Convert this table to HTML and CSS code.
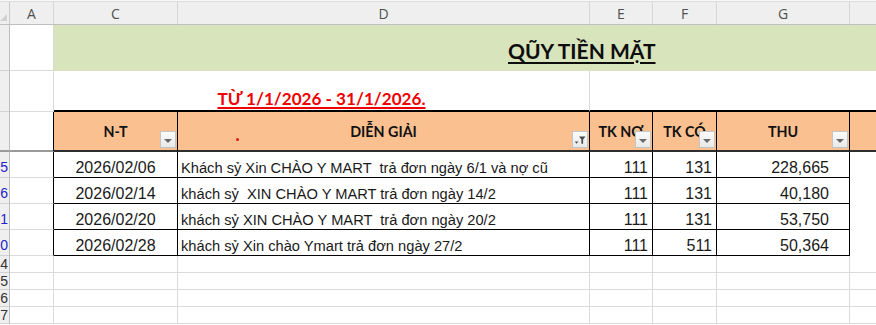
FILE: index.html
```html
<!DOCTYPE html>
<html lang="vi">
<head>
<meta charset="utf-8">
<title>Quỹ tiền mặt</title>
<link rel="stylesheet" href="styles.css">
</head>
<body>
<div class="top"></div>
<div class="sheet">
  <div class="corner"><span class="tri"></span></div>
  <div class="ch">A</div>
  <div class="ch">C</div>
  <div class="ch">D</div>
  <div class="ch">E</div>
  <div class="ch">F</div>
  <div class="ch">G</div>
  <div class="ch ch-last"></div>

  <div class="rh"></div>
  <div class="cell a"></div>
  <div class="title"><span>QŨY TIỀN MẶT</span></div>

  <div class="rh"></div>
  <div class="cell a"></div>
  <div class="period"><span>TỪ 1/1/2026 - 31/1/2026.</span></div>
  <div class="period-rest"></div>

  <div class="rh rh-frz"></div>
  <div class="cell a a-tbl a-frz"></div>
  <div class="hd">N-T<span class="fbtn"><span class="arr"></span></span></div>
  <div class="hd">DIỄN GIẢI<span class="dot"></span><span class="fbtn"><svg width="14" height="14" viewBox="0 0 14 14"><path d="M6 3.5h6.5l-2.4 3v4.2h-1.7v-4.2z" fill="#4a4a4a"/><path d="M1.8 8.5h3.6l-1.8 2.2z" fill="#4a4a4a"/></svg></span></div>
  <div class="hd">TK NỢ<span class="fbtn"><span class="arr"></span></span></div>
  <div class="hd">TK CÓ<span class="fbtn"><span class="arr"></span></span></div>
  <div class="hd">THU<span class="fbtn"><span class="arr"></span></span></div>
  <div class="hd hd-last"></div>

  <div class="rh rh-f"><span>5</span></div>
  <div class="cell a a-tbl"></div>
  <div class="td td-c">2026/02/06</div>
  <div class="td td-l">Khách sỷ Xin CHÀO Y MART  trả đơn ngày 6/1 và nợ cũ</div>
  <div class="td td-r">111</div>
  <div class="td td-r">131</div>
  <div class="td td-amt">228,665</div>
  <div class="cell h-blank"></div>

  <div class="rh rh-f"><span>6</span></div>
  <div class="cell a a-tbl"></div>
  <div class="td td-c">2026/02/14</div>
  <div class="td td-l">khách sỷ  XIN CHÀO Y MART trả đơn ngày 14/2</div>
  <div class="td td-r">111</div>
  <div class="td td-r">131</div>
  <div class="td td-amt">40,180</div>
  <div class="cell h-blank"></div>

  <div class="rh rh-f"><span>1</span></div>
  <div class="cell a a-tbl"></div>
  <div class="td td-c">2026/02/20</div>
  <div class="td td-l">khách sỷ XIN CHÀO Y MART  trả đơn ngày 20/2</div>
  <div class="td td-r">111</div>
  <div class="td td-r">131</div>
  <div class="td td-amt">53,750</div>
  <div class="cell h-blank"></div>

  <div class="rh rh-f"><span>0</span></div>
  <div class="cell a a-tbl"></div>
  <div class="td td-c">2026/02/28</div>
  <div class="td td-l">khách sỷ Xin chào Ymart trả đơn ngày 27/2</div>
  <div class="td td-r">111</div>
  <div class="td td-r">511</div>
  <div class="td td-amt">50,364</div>
  <div class="cell h-blank"></div>

  <div class="rh rh-s"><span>4</span></div>
  <div class="cell a"></div><div class="cell"></div><div class="cell"></div><div class="cell"></div><div class="cell"></div><div class="cell"></div><div class="cell h"></div>

  <div class="rh rh-s"><span>5</span></div>
  <div class="cell a"></div><div class="cell"></div><div class="cell"></div><div class="cell"></div><div class="cell"></div><div class="cell"></div><div class="cell h"></div>

  <div class="rh rh-s"><span>6</span></div>
  <div class="cell a"></div><div class="cell"></div><div class="cell"></div><div class="cell"></div><div class="cell"></div><div class="cell"></div><div class="cell h"></div>

  <div class="rh rh-s"><span>7</span></div>
  <div class="cell a"></div><div class="cell"></div><div class="cell"></div><div class="cell"></div><div class="cell"></div><div class="cell"></div><div class="cell h"></div>
</div>
</body>
</html>
```
FILE: styles.css
```css
* { box-sizing: border-box; }
html, body { margin: 0; padding: 0; }
body {
  width: 876px;
  height: 325px;
  overflow: hidden;
  background: #ffffff;
  font-family: "Liberation Sans", Arial, sans-serif;
}
.top {
  height: 2px;
  background: #f7f7f7;
  border-bottom: 1px solid #dedede;
}
.sheet {
  display: grid;
  grid-template-columns: 10px 44px 124px 412px 63px 64px 133px 26px;
  grid-template-rows: 23px 46px 41px 40px repeat(4, 26px) repeat(4, 17px);
}
.corner {
  position: relative;
  background: #efefef;
  border-right: 1px solid #c9c9c9;
  border-bottom: 1px solid #bfbfbf;
}
.tri {
  position: absolute;
  right: 2px;
  bottom: 3px;
  width: 0;
  height: 0;
  border-left: 7px solid transparent;
  border-bottom: 7px solid #d2d2d2;
}
.ch {
  display: flex;
  align-items: center;
  justify-content: center;
  background: #efefef;
  border-right: 1px solid #d6d6d6;
  border-bottom: 1px solid #bfbfbf;
  font-family: "Open Sans", "Liberation Sans", sans-serif;
  font-size: 14px;
  color: #505050;
  padding-top: 1px;
}
.ch-last { border-right: none; }
.rh {
  display: flex;
  justify-content: flex-end;
  align-items: flex-end;
  overflow: hidden;
  background: #efefef;
  border-right: 1px solid #bdbdbd;
  border-bottom: 1px solid #d2d2d2;
  font-family: "Liberation Sans", Arial, sans-serif;
  font-size: 14px;
  line-height: 14px;
  color: #333333;
  padding-right: 1px;
  padding-bottom: 2px;
}
.rh-f { color: #2424c8; padding-bottom: 3px; }
.rh-s { padding-bottom: 1px; }
.rh-frz { border-bottom: 2px solid #9a9a9a; }
.cell {
  border-right: 1px solid #dadada;
  border-bottom: 1px solid #dadada;
}
.a-tbl { border-right: 1px solid #000000; }
.a-frz { border-bottom: 2px solid #9a9a9a; }
.h { border-right: none; }
.h-blank { border: none; }
.title {
  grid-column: 3 / 9;
  display: flex;
  align-items: center;
  background: #d8e4bc;
  padding-left: 454px;
  padding-top: 4px;
}
.title span {
  font-family: Lato, "Open Sans", sans-serif;
  font-weight: 700;
  font-size: 21px;
  color: #0d0d0d;
  text-decoration: underline;
  text-decoration-thickness: 2px;
  text-underline-offset: 3px;
  white-space: nowrap;
}
.period {
  grid-column: 3 / 5;
  display: flex;
  align-items: flex-end;
  justify-content: center;
  border-right: 1px solid #dadada;
  border-bottom: 2px solid #000000;
  padding-bottom: 2px;
}
.period span {
  font-family: Lato, "Open Sans", sans-serif;
  font-weight: 700;
  font-size: 17.1px;
  line-height: 19px;
  color: #f00000;
  text-decoration: underline;
  text-decoration-thickness: 1.5px;
  text-underline-offset: 2px;
  white-space: nowrap;
}
.period-rest {
  grid-column: 5 / 9;
  border-bottom: 2px solid #000000;
}
.hd {
  position: relative;
  display: flex;
  align-items: center;
  justify-content: center;
  background: #fac090;
  border-right: 1px solid #000000;
  border-bottom: 2px solid #2e2e2e;
  font-family: Lato, "Open Sans", sans-serif;
  font-weight: 700;
  font-size: 14.3px;
  color: #111111;
  padding-top: 1px;
  white-space: nowrap;
}
.hd-last { border-right: none; }
.fbtn {
  position: absolute;
  right: 1px;
  bottom: 2px;
  width: 16px;
  height: 17px;
  display: flex;
  align-items: center;
  justify-content: center;
  background: linear-gradient(#fbfbfb, #e9e9e9);
  border: 1px solid #c4c4c4;
}
.arr {
  width: 0;
  height: 0;
  margin-top: 2px;
  border-left: 4px solid transparent;
  border-right: 4px solid transparent;
  border-top: 4px solid #6a6a6a;
}
.dot {
  position: absolute;
  left: 58px;
  top: 26px;
  width: 3px;
  height: 3px;
  border-radius: 50%;
  background: #e01818;
}
.td {
  display: flex;
  align-items: flex-end;
  border-right: 1px solid #000000;
  border-bottom: 1px solid #000000;
  font-size: 16px;
  line-height: 18px;
  color: #1a1a1a;
  white-space: pre;
  overflow: hidden;
}
.td-c { justify-content: center; }
.td-l { justify-content: flex-start; padding-left: 3px; font-size: 14.67px; }
.td-r { justify-content: flex-end; padding-right: 4px; }
.td-amt { justify-content: flex-end; padding-right: 20px; }
```
